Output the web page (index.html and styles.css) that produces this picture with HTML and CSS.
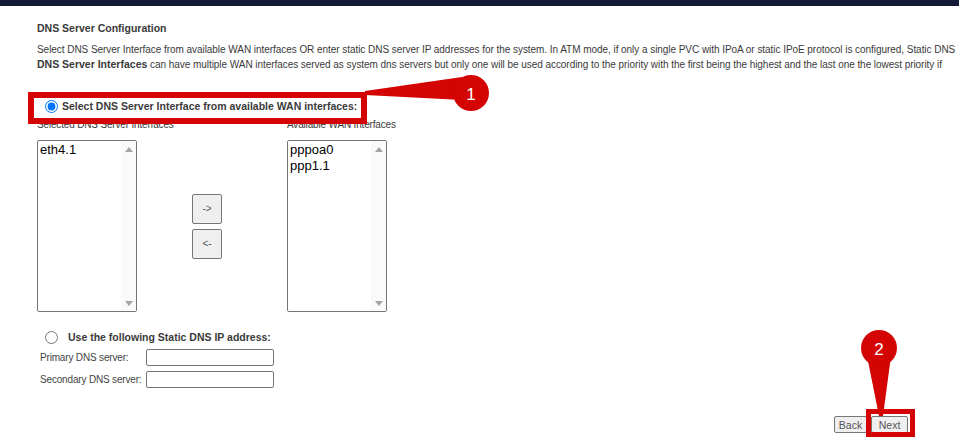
FILE: index.html
```html
<!DOCTYPE html>
<html>
<head>
<meta charset="utf-8">
<link rel="stylesheet" href="styles.css">
</head>
<body>
<div class="topbar"></div>
<div class="page">
  <div class="title">DNS Server Configuration</div>
  <p class="desc"><span class="line">Select DNS Server Interface from available WAN interfaces OR enter static DNS server IP addresses for the system. In ATM mode, if only a single PVC with IPoA or static IPoE protocol is configured, Static DNS</span><span class="line"><b>DNS Server Interfaces</b> can have multiple WAN interfaces served as system dns servers but only one will be used according to the priority with the first being the highest and the last one the lowest priority if</span></p>

  <label class="radio-row first">
    <input type="radio" name="dns" checked>
    <span class="radio-label">Select DNS Server Interface from available WAN interfaces:</span>
  </label>

  <div class="list-labels">
    <span class="list-label">Selected DNS Server Interfaces</span>
    <span class="list-label">Available WAN Interfaces</span>
  </div>

  <div class="lists">
    <div class="listbox">
      <div class="options">
        <div class="opt">eth4.1</div>
      </div>
      <div class="scroll"><span class="arr up"></span><span class="arr down"></span></div>
    </div>
    <div class="mover">
      <button class="mv">-&gt;</button>
      <button class="mv">&lt;-</button>
    </div>
    <div class="listbox">
      <div class="options">
        <div class="opt">pppoa0</div>
        <div class="opt">ppp1.1</div>
      </div>
      <div class="scroll"><span class="arr up"></span><span class="arr down"></span></div>
    </div>
  </div>

  <label class="radio-row second">
    <input type="radio" name="dns">
    <span class="radio-label">Use the following Static DNS IP address:</span>
  </label>

  <div class="field">
    <span class="field-label">Primary DNS server:</span>
    <input class="txt" type="text">
  </div>
  <div class="field">
    <span class="field-label">Secondary DNS server:</span>
    <input class="txt" type="text">
  </div>

  <div class="actions">
    <button class="nav back">Back</button>
    <button class="nav next">Next</button>
  </div>
</div>

<div class="hl hl-radio"></div>
<div class="hl hl-next"></div>
<svg class="markers" width="959" height="446" viewBox="0 0 959 446">
  <polygon points="365,91 462,77 462,100 365,95" fill="#d40404"/>
  <circle cx="471" cy="93" r="18" fill="#d40404"/>
  <text x="471" y="99.5" class="num" text-anchor="middle">1</text>
  <polygon points="867,356 891,356 883,416 879,416" fill="#d40404"/>
  <circle cx="879" cy="348" r="18" fill="#d40404"/>
  <text x="879" y="354.5" class="num" text-anchor="middle">2</text>
</svg>
</body>
</html>
```
FILE: styles.css
```css
html, body {
  margin: 0;
  padding: 0;
  width: 959px;
  height: 446px;
  overflow: hidden;
  background: #fff;
}
body {
  position: relative;
  font-family: "Liberation Sans", Arial, sans-serif;
  font-size: 10px;
  letter-spacing: -0.05px;
  color: #3a3a3a;
}
.topbar {
  height: 6px;
  background: #131a37;
}
.page {
  padding-left: 37px;
  padding-right: 51px;
}
.title {
  margin-top: 15px;
  font-weight: bold;
  font-size: 10.5px;
  letter-spacing: 0;
  line-height: 14px;
}
.desc {
  margin: 8px 0 0 0;
  line-height: 14px;
}
.desc .line {
  display: block;
  white-space: nowrap;
}
.desc b {
  font-size: 10.5px;
  letter-spacing: 0;
}
.radio-row {
  display: flex;
  align-items: center;
  height: 16px;
}
.radio-row input {
  margin: 0 0 0 8px;
  width: 13px;
  height: 13px;
}
.radio-row.first {
  margin-top: 26px;
}
.radio-row.first .radio-label {
  margin-left: 4px;
}
.radio-row.second {
  margin-top: 17px;
}
.radio-row.second .radio-label {
  margin-left: 10px;
}
.radio-label {
  font-weight: bold;
  font-size: 10.5px;
  letter-spacing: 0;
}
.list-labels {
  display: flex;
  margin-top: 4px;
  height: 13px;
  line-height: 13px;
  letter-spacing: -0.17px;
}
.list-label:first-child {
  width: 250px;
}
.lists {
  display: flex;
  align-items: center;
  margin-top: 9px;
}
.listbox {
  width: 98px;
  height: 170px;
  border: 1px solid #767676;
  border-radius: 2px;
  display: flex;
  background: #fff;
}
.options {
  flex: 1;
  padding: 1px 0 0 2px;
  font-family: "Liberation Sans", Arial, sans-serif;
  font-size: 13px;
  letter-spacing: 0;
  color: #000;
}
.opt {
  line-height: 16px;
}
.scroll {
  width: 15px;
  background: #fafafa;
  display: flex;
  flex-direction: column;
  justify-content: space-between;
  align-items: center;
  padding: 6px 0 5px;
}
.arr {
  width: 0;
  height: 0;
  border-left: 4px solid transparent;
  border-right: 4px solid transparent;
}
.arr.up {
  border-bottom: 5px solid #a3a3a3;
}
.arr.down {
  border-top: 5px solid #a3a3a3;
}
.mover {
  width: 150px;
  display: flex;
  flex-direction: column;
  gap: 5px;
  padding-left: 55px;
  box-sizing: border-box;
}
.mv {
  width: 30px;
  height: 30px;
  padding: 0;
  border: 1px solid #767676;
  border-radius: 2px;
  background: #efefef;
  font-family: "Liberation Sans", Arial, sans-serif;
  font-size: 10px;
  letter-spacing: 0;
  color: #555;
}
.field {
  display: flex;
  align-items: center;
  height: 17px;
  margin-top: 5px;
  letter-spacing: -0.17px;
}
.radio-row.second + .field {
  margin-top: 4px;
}
.field-label {
  width: 109px;
  padding-left: 3px;
  box-sizing: border-box;
  white-space: nowrap;
  color: #444;
}
.txt {
  width: 128px;
  height: 17px;
  box-sizing: border-box;
  border: 1px solid #767676;
  border-radius: 2px;
  padding: 0 2px;
  margin: 0;
}
.actions {
  margin-top: 28px;
  display: flex;
  justify-content: flex-end;
  gap: 4px;
}
.nav {
  height: 17px;
  padding: 0;
  border: 1px solid #767676;
  border-radius: 2px;
  background: #efefef;
  font-family: "Liberation Sans", Arial, sans-serif;
  font-size: 10.5px;
  letter-spacing: 0;
  color: #555;
}
.nav.back { width: 33px; }
.nav.next { width: 37px; }

.hl {
  position: absolute;
  box-sizing: border-box;
  border: 6px solid #d40404;
}
.hl-radio {
  left: 28px;
  top: 92px;
  width: 339px;
  height: 32px;
}
.hl-next {
  left: 866px;
  top: 409px;
  width: 49px;
  height: 28px;
  border-width: 5px;
}
.markers {
  position: absolute;
  left: 0;
  top: 0;
  pointer-events: none;
}
.num {
  fill: #fff;
  font-family: "Liberation Sans", Arial, sans-serif;
  font-size: 17px;
  letter-spacing: 0;
}
```
